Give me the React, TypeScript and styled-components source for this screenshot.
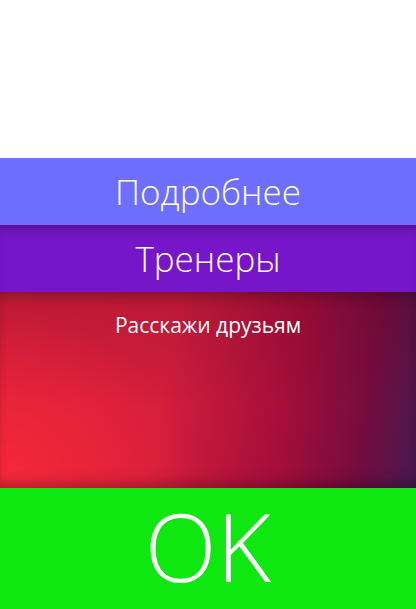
import React from "react";
import styled, { createGlobalStyle } from "styled-components";

const GlobalStyle = createGlobalStyle`
  html, body { margin: 0; padding: 0; background: #ffffff; }
  body { font-family: "Open Sans", "Liberation Sans", sans-serif; }
  * { box-sizing: border-box; }
`;

const Page = styled.div`
  width: 416px;
  height: 609px;
  display: flex;
  flex-direction: column;
  overflow: hidden;
`;

const Blank = styled.div`
  height: 158px;
  background: #ffffff;
`;

const Bar = styled.div<{ $bg: string; $shadow?: boolean }>`
  height: 67px;
  display: flex;
  align-items: center;
  justify-content: center;
  background: ${(p) => p.$bg};
  color: #ffffff;
  font-weight: 300;
  font-size: 35px;
  line-height: 1;
  box-shadow: ${(p) => (p.$shadow ? "inset 0 12px 12px -8px rgba(0,0,0,0.3)" : "none")};
`;

const Share = styled.div`
  height: 196px;
  display: flex;
  justify-content: center;
  padding-top: 20px;
  color: #ffffff;
  font-size: 21px;
  line-height: 26px;
  background:
    radial-gradient(ellipse 200px 170px at 0% 100%, rgba(250, 42, 56, 0.9) 0%, rgba(250, 42, 56, 0) 100%),
    linear-gradient(to bottom, rgba(60, 0, 30, 0.18) 0%, rgba(60, 0, 30, 0) 60%),
    linear-gradient(100deg, #dc1f3b 0%, #d41e3c 40%, #a50e3a 68%, #750c3e 86%, #461a50 100%);
  box-shadow: inset 0 12px 14px -8px rgba(0,0,0,0.3), inset 0 -12px 14px -8px rgba(0,0,0,0.3);
`;

const Ok = styled.div`
  flex: 1;
  display: flex;
  align-items: center;
  justify-content: center;
  background: #0ee810;
  color: #ffffff;
  font-weight: 300;
  font-size: 94px;
  line-height: 1;
  padding-bottom: 6px;
`;

export default function App() {
  return (
    <>
      <GlobalStyle />
      <Page>
        <Blank />
        <Bar $bg="#6e6eff">Подробнее</Bar>
        <Bar $bg="#7715c8" $shadow>Тренеры</Bar>
        <Share>Расскажи друзьям</Share>
        <Ok>OK</Ok>
      </Page>
    </>
  );
}
